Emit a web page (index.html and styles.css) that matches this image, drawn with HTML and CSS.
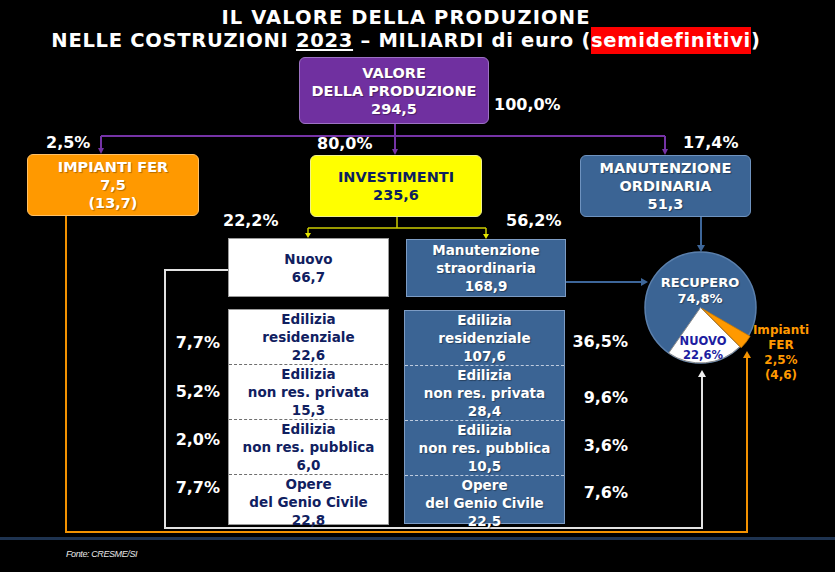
FILE: index.html
```html
<!DOCTYPE html>
<html lang="it">
<head>
<meta charset="utf-8">
<title>Il valore della produzione nelle costruzioni 2023</title>
<link rel="stylesheet" href="styles.css">
</head>
<body>
<div class="page">
  <header class="title">
    <div class="t1">IL VALORE DELLA PRODUZIONE</div>
    <div class="t2">NELLE COSTRUZIONI <u>2023</u> – MILIARDI di euro (<span class="hl">semidefinitivi</span>)</div>
  </header>

  <main class="diagram">
    <svg class="wires" width="835" height="481" viewBox="0 0 835 481">
      <!-- purple tree -->
      <g stroke="#7533a6" stroke-width="2" fill="none">
        <path d="M395 68 V80"/>
        <path d="M101 80 H665"/>
        <path d="M101 80 V93"/>
        <path d="M395 80 V94"/>
        <path d="M665 80 V94"/>
      </g>
      <g fill="#7533a6">
        <polygon points="98,92 104,92 101,98"/>
        <polygon points="392,93 398,93 395,99"/>
        <polygon points="662,93 668,93 665,99"/>
      </g>
      <!-- yellow split -->
      <g stroke="#cccc00" stroke-width="1.5" fill="none">
        <path d="M397 161 V172"/>
        <path d="M308 172 H486"/>
        <path d="M308 172 V178"/>
        <path d="M486 172 V179"/>
      </g>
      <g fill="#e6e600">
        <polygon points="305,177 311,177 308,182"/>
        <polygon points="483,178 489,178 486,183"/>
      </g>
      <!-- blue arrows -->
      <g stroke="#3d6699" stroke-width="2" fill="none">
        <path d="M701 161 V190"/>
        <path d="M566 226 H642"/>
      </g>
      <g fill="#3d6699">
        <polygon points="697,189 705,189 701,196"/>
        <polygon points="641,222 641,230 648,226"/>
      </g>
      <!-- white loop -->
      <path d="M242 214 H165 V472 H702 V320" stroke="#e2e2e2" stroke-width="2" fill="none"/>
      <polygon points="698,321 706,321 702,314" fill="#f0f0f0"/>
      <!-- orange loop -->
      <path d="M66 160 V476 H747 V301" stroke="#f39200" stroke-width="2" fill="none"/>
      <polygon points="743,302 751,302 747,295" fill="#f39200"/>
      <!-- pie -->
      <circle cx="700.5" cy="251.5" r="55.5" fill="#3b6494" stroke="#5b80ad" stroke-width="1.5"/>
      <path d="M700.5 251.5 L739.7 290.7 A55.5 55.5 0 0 1 668.7 297 Z" fill="#ffffff" stroke="#8c8c8c" stroke-width="1"/>
      <path d="M702 252.5 L750.1 280.3 A55.5 55.5 0 0 1 741.2 291.7 Z" fill="#ff9900" stroke="#c77700" stroke-width="0.8"/>
    </svg>

    <div class="node box purple n-valore">VALORE<br>DELLA PRODUZIONE<br>294,5</div>
    <div class="pct p-100">100,0%</div>

    <div class="pct p-fer">2,5%</div>
    <div class="pct p-inv">80,0%</div>
    <div class="pct p-mord">17,4%</div>

    <div class="node box orange n-fer">IMPIANTI FER<br>7,5<br>(13,7)</div>
    <div class="node box yellow n-inv">INVESTIMENTI<br>235,6</div>
    <div class="node box blue n-mord">MANUTENZIONE<br>ORDINARIA<br>51,3</div>

    <div class="pct p-nuovo">22,2%</div>
    <div class="pct p-mstr">56,2%</div>

    <div class="node box sub white n-nuovo">Nuovo<br>66,7</div>
    <div class="node box sub blue2 n-mstr">Manutenzione<br>straordinaria<br>168,9</div>

    <div class="node col col-left">
      <div class="cell">Edilizia<br>residenziale<br>22,6</div>
      <div class="cell">Edilizia<br>non res. privata<br>15,3</div>
      <div class="cell">Edilizia<br>non res. pubblica<br>6,0</div>
      <div class="cell">Opere<br>del Genio Civile<br>22,8</div>
    </div>
    <div class="node col col-right">
      <div class="cell">Edilizia<br>residenziale<br>107,6</div>
      <div class="cell">Edilizia<br>non res. privata<br>28,4</div>
      <div class="cell">Edilizia<br>non res. pubblica<br>10,5</div>
      <div class="cell">Opere<br>del Genio Civile<br>22,5</div>
    </div>

    <div class="pct pl pl-1">7,7%</div>
    <div class="pct pl pl-2">5,2%</div>
    <div class="pct pl pl-3">2,0%</div>
    <div class="pct pl pl-4">7,7%</div>

    <div class="pct pr pr-1">36,5%</div>
    <div class="pct pr pr-2">9,6%</div>
    <div class="pct pr pr-3">3,6%</div>
    <div class="pct pr pr-4">7,6%</div>

    <div class="node pie-label pie-rec">RECUPERO<br>74,8%</div>
    <div class="node pie-label pie-nuovo">NUOVO<br>22,6%</div>
    <div class="node fer-label">Impianti<br>FER<br>2,5%<br>(4,6)</div>
  </main>

  <footer class="source">Fonte: CRESME/SI</footer>
</div>
</body>
</html>
```

FILE: styles.css
```css
* {
  box-sizing: border-box;
  margin: 0;
  padding: 0;
}

html,
body {
  background: #000;
}

body {
  width: 835px;
  height: 572px;
  overflow: hidden;
  font-family: "DejaVu Sans", "Liberation Sans", sans-serif;
  font-weight: bold;
  color: #fff;
}

.page {
  display: flex;
  flex-direction: column;
  width: 835px;
  height: 572px;
}

/* ---------- title ---------- */
.title {
  height: 56px;
  flex: none;
  padding: 6px 23px 0 0;
  text-align: center;
  font-size: 19.5px;
  line-height: 23px;
  white-space: nowrap;
}

.t1 {
  letter-spacing: 1.1px;
}

.t2 {
  letter-spacing: 0.7px;
}

.title u {
  text-decoration-thickness: 2px;
  text-underline-offset: 2px;
}

.hl {
  background: #ff0000;
  padding: 2px 0;
}

/* ---------- diagram canvas ---------- */
.diagram {
  position: relative;
  height: 481px;
  flex: none;
}

.wires {
  position: absolute;
  left: 0;
  top: 0;
}

.node {
  position: absolute;
}

.box {
  display: flex;
  flex-direction: column;
  justify-content: center;
  align-items: center;
  text-align: center;
  font-size: 14.5px;
  line-height: 18px;
  white-space: nowrap;
  border-radius: 6px;
}

.box.sub {
  font-size: 13.5px;
  border-radius: 0;
}

.purple {
  background: #7030a0;
  border: 1px solid #9d72c4;
  text-shadow: 1px 1px 1px rgba(0, 0, 0, 0.35);
}

.orange {
  background: #ff9900;
  border: 1px solid #ffc066;
  text-shadow: 1px 1px 1px rgba(0, 0, 0, 0.3);
}

.yellow {
  background: #ffff00;
  border: 1px solid #f0f08a;
  color: #0d1f5e;
}

.blue {
  background: #3b6494;
  border: 1px solid #6f93bf;
  text-shadow: 1px 1px 1px rgba(0, 0, 0, 0.35);
}

.blue2 {
  background: #3b6494;
  border: 1px solid #7d9cc4;
  text-shadow: 1px 1px 1px rgba(0, 0, 0, 0.35);
}

.white {
  background: #ffffff;
  border: 1px solid #9a9a9a;
  color: #102060;
}

.n-valore { left: 299px; top: 1px;   width: 190px; height: 67px; }
.n-fer    { left: 27px;  top: 98px;  width: 172px; height: 62px; }
.n-inv    { left: 310px; top: 99px;  width: 172px; height: 62px; }
.n-mord   { left: 580px; top: 99px;  width: 171px; height: 62px; }
.n-nuovo  { left: 228px; top: 182px; width: 161px; height: 59px; }
.n-mstr   { left: 406px; top: 183px; width: 160px; height: 58px; }

/* ---------- breakdown columns ---------- */
.col {
  display: flex;
  flex-direction: column;
  font-size: 13.5px;
  line-height: 18px;
  text-align: center;
  white-space: nowrap;
}

.col .cell {
  flex: 1;
  display: flex;
  flex-direction: column;
  justify-content: center;
  align-items: center;
}

.col-left {
  left: 228px;
  top: 253px;
  width: 161px;
  height: 216px;
  background: #fff;
  border: 1px solid #9a9a9a;
  color: #102060;
}

.col-left .cell + .cell {
  border-top: 1px dashed #6e6e6e;
}

.col-right {
  left: 404px;
  top: 254px;
  width: 161px;
  height: 214px;
  background: #3b6494;
  border: 1px solid #7d9cc4;
  color: #fff;
  text-shadow: 1px 1px 1px rgba(0, 0, 0, 0.35);
}

.col-right .cell + .cell {
  border-top: 1px dashed #c0cde0;
}

/* ---------- percentages ---------- */
.pct {
  position: absolute;
  font-size: 16px;
  line-height: 20px;
  white-space: nowrap;
}

.p-100   { left: 494px; top: 39px; }
.p-fer   { left: 46px;  top: 77px; }
.p-inv   { left: 317px; top: 78px; }
.p-mord  { left: 683px; top: 77px; }
.p-nuovo { left: 223px; top: 155px; }
.p-mstr  { left: 506px; top: 155px; }

.pl {
  left: 150px;
  width: 70px;
  text-align: right;
}

.pl-1 { top: 277px; }
.pl-2 { top: 326px; }
.pl-3 { top: 374px; }
.pl-4 { top: 422px; }

.pr {
  left: 558px;
  width: 70px;
  text-align: right;
}

.pr-1 { top: 276px; }
.pr-2 { top: 332px; }
.pr-3 { top: 380px; }
.pr-4 { top: 427px; }

/* ---------- pie labels ---------- */
.pie-label {
  text-align: center;
  white-space: nowrap;
}

.pie-rec {
  left: 650px;
  top: 219px;
  width: 100px;
  font-size: 13px;
  line-height: 16px;
  text-shadow: 1px 1px 1px rgba(0, 0, 0, 0.35);
}

.pie-nuovo {
  left: 663px;
  top: 278px;
  width: 80px;
  font-size: 11.5px;
  line-height: 14px;
  color: #1c1ca0;
}

.fer-label {
  left: 746px;
  top: 267px;
  width: 70px;
  text-align: center;
  font-size: 12px;
  line-height: 15px;
  color: #ff9900;
}

/* ---------- footer ---------- */
.source {
  flex: none;
  border-top: 3px solid #1e3350;
  padding: 8px 0 0 66px;
  font-family: "Liberation Sans", Arial, sans-serif;
  font-style: italic;
  font-weight: normal;
  font-size: 9px;
  letter-spacing: -0.4px;
  line-height: 12px;
  color: #e8e8e8;
}
```
